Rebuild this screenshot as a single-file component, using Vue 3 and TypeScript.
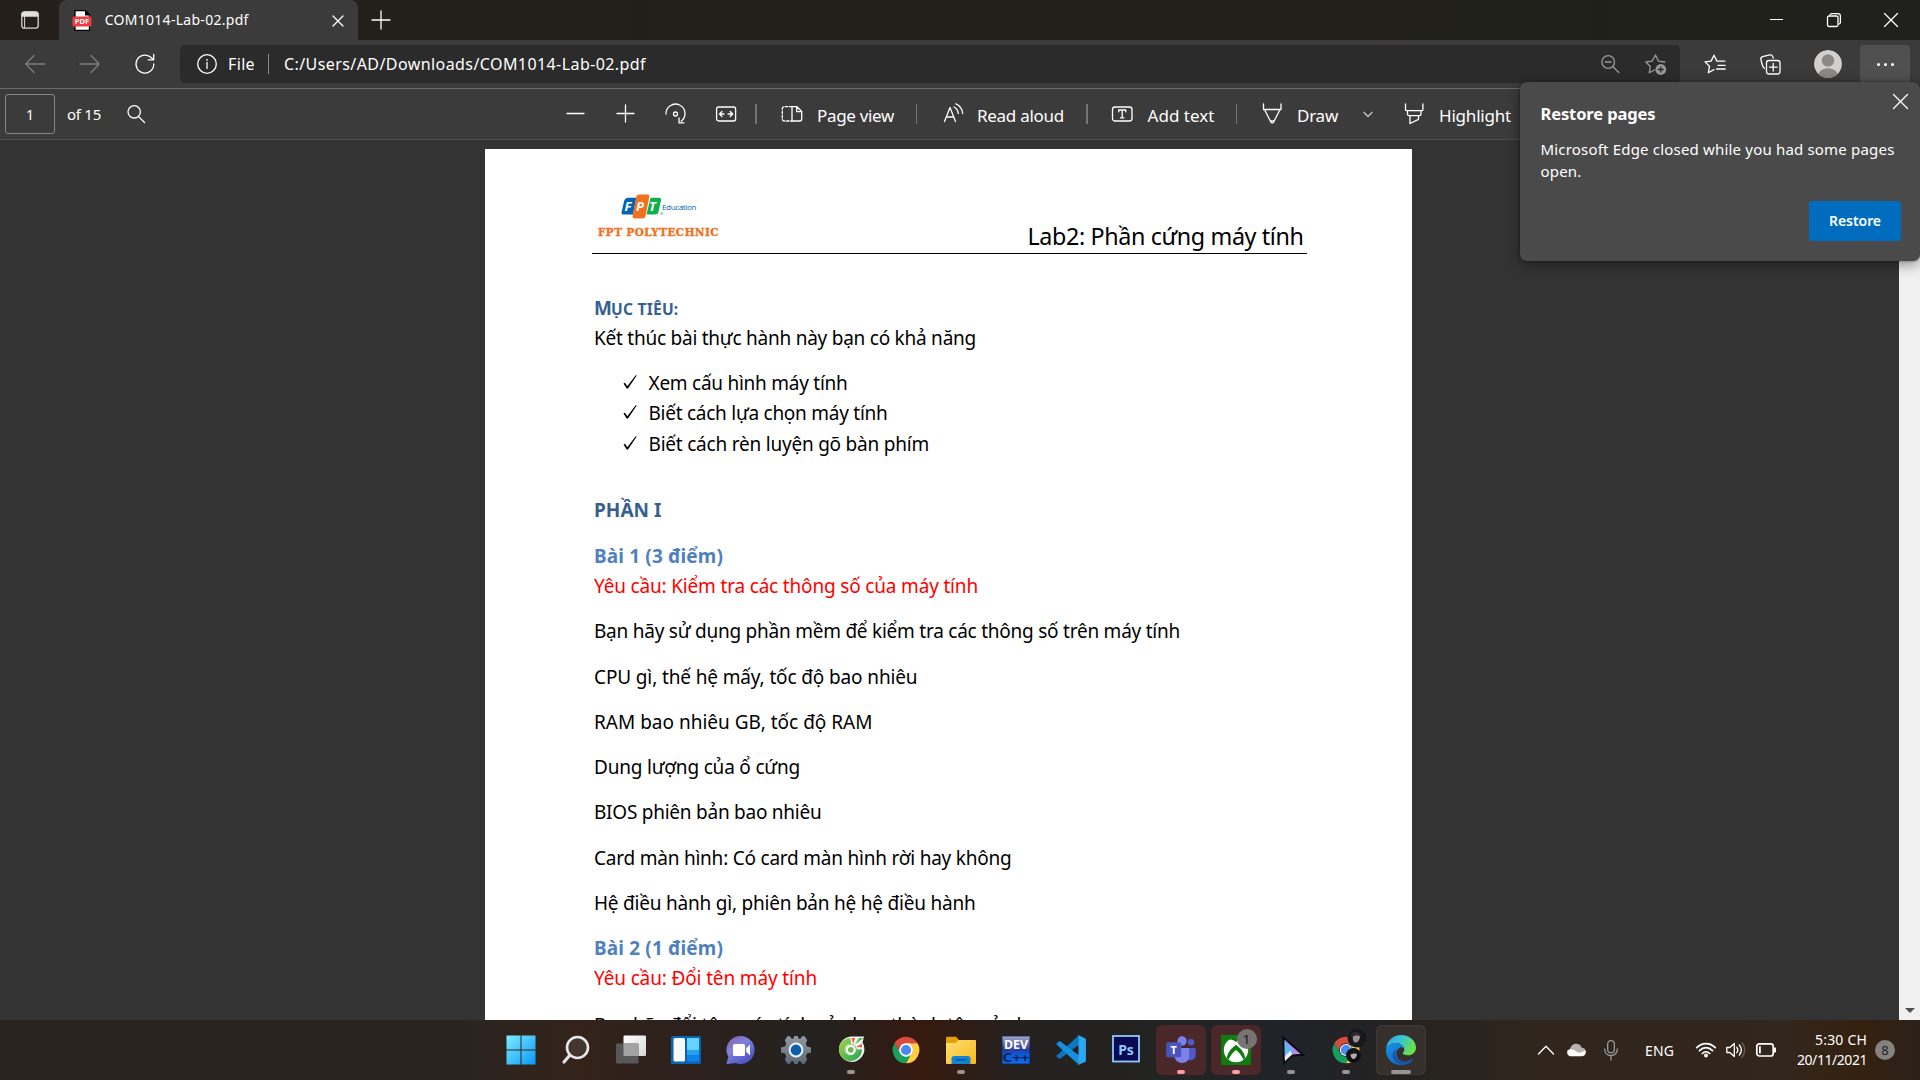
<script setup lang="ts">
import type { Directive } from 'vue'

// Tracks a label so that it fills the given width in pixels.
const vFit: Directive<HTMLElement, number> = {
  mounted(el, binding) {
    el.style.letterSpacing = '0px'
    const natural = el.getBoundingClientRect().width
    const count = Array.from(el.textContent ?? '').length
    if (count > 0) el.style.letterSpacing = `${(binding.value - natural) / count}px`
  },
}

interface Line {
  text: string
  width: number
  kind: 'title' | 'heading' | 'request' | 'para'
}

const goals = [
  { text: 'Xem cấu hình máy tính', width: 199 },
  { text: 'Biết cách lựa chọn máy tính', width: 239 },
  { text: 'Biết cách rèn luyện gõ bàn phím', width: 280.5 },
]

const lines: Line[] = [
  { text: 'PHẦN I', width: 67.5, kind: 'title' },
  { text: 'Bài 1 (3 điểm)', width: 129, kind: 'heading' },
  { text: 'Yêu cầu: Kiểm tra các thông số của máy tính', width: 384, kind: 'request' },
  { text: 'Bạn hãy sử dụng phần mềm để kiểm tra các thông số trên máy tính', width: 586, kind: 'para' },
  { text: 'CPU gì, thế hệ mấy, tốc độ bao nhiêu', width: 323.5, kind: 'para' },
  { text: 'RAM bao nhiêu GB, tốc độ RAM', width: 278.5, kind: 'para' },
  { text: 'Dung lượng của ổ cứng', width: 206, kind: 'para' },
  { text: 'BIOS phiên bản bao nhiêu', width: 227.5, kind: 'para' },
  { text: 'Card màn hình: Có card màn hình rời hay không', width: 417.5, kind: 'para' },
  { text: 'Hệ điều hành gì, phiên bản hệ hệ điều hành', width: 381.5, kind: 'para' },
  { text: 'Bài 2 (1 điểm)', width: 129, kind: 'heading' },
  { text: 'Yêu cầu: Đổi tên máy tính', width: 223, kind: 'request' },
  { text: 'Bạn hãy đổi tên máy tính của bạn thành tên của bạn', width: 456, kind: 'para' },
]
</script>

<template>
  <div class="desktop">
    <header class="tabstrip">
      <svg class="tab-actions" viewBox="0 0 18 18" width="18" height="18">
        <rect x=".8" y=".8" width="16.4" height="16.4" rx="2.6" fill="none" stroke="#d8d6d3" stroke-width="1.3" />
        <path d="M1 5.2V3.2A2.4 2.4 0 0 1 3.4 1h11.200A2.400 2.400 0 0 1 17 3.200v2zM3.600 5v12" fill="#e4e3e0" stroke="#d8d6d3" stroke-width="1" />
      </svg>
      <div class="tab">
        <svg class="pdf" viewBox="0 0 20 21" width="20" height="21">
          <path d="M3 .7h10.500L17.500 5v15.300H3z" fill="#fff" stroke="#000" stroke-width="1.300" />
          <path d="M13 .5V5.500h5z" fill="#000" />
          <rect x=".5" y="6.500" width="19" height="10" rx="1.500" fill="#f23b3f" />
          <text x="10" y="14.200" text-anchor="middle" class="pdf-text">PDF</text>
        </svg>
        <span class="tab-title"><span v-fit="144" class="fit">COM1014-Lab-02.pdf</span></span>
        <svg class="tab-close" viewBox="0 0 12 12" width="12" height="12"><path d="M1 1l10 10M11 1L1 11" class="st" /></svg>
      </div>
      <svg class="tab-new" viewBox="0 0 18 18" width="18" height="18"><path d="M9 0v18M0 9h18" class="st" /></svg>
      <div class="window-buttons">
        <svg viewBox="0 0 14 14" width="14" height="14"><path d="M0 6.500h13" stroke="#fff" stroke-width="1" /></svg>
        <svg viewBox="0 0 14 14" width="14" height="14">
          <rect x=".5" y="3" width="10.500" height="10.500" rx="1.500" class="st" />
          <path d="M3 1.800C3.300 1 3.700.6 4.500.6H11A2.500 2.500 0 0 1 13.400 3v6.500c0 .8-.4 1.200-1.200 1.500" class="st" />
        </svg>
        <svg viewBox="0 0 14 14" width="14" height="14"><path d="M.5.5l13 13M13.500.5l-13 13" class="st" /></svg>
      </div>
    </header>

    <nav class="navbar">
      <svg class="back" viewBox="0 0 20 20" width="20" height="20"><path d="M9 1.500L.8 10 9 18.500M1 10h19" class="st dim" /></svg>
      <svg class="forward" viewBox="0 0 20 20" width="20" height="20"><path d="M11 1.500l8.200 8.500-8.200 8.500M19 10H0" class="st dim" /></svg>
      <svg class="reload" viewBox="0 0 20 20" width="20" height="20"><path d="M18.800 10A8.900 9 0 1 1 15.400 3l3 2.600M18.700.5v5.300h-5.500" class="st" stroke-width="1.500" /></svg>
      <div class="address">
        <svg class="info" viewBox="0 0 20 20" width="20" height="20">
          <circle cx="10" cy="10" r="9.300" class="st" /><path d="M10 8.500v6" class="st" /><circle cx="10" cy="5.800" r=".9" fill="#fff" />
        </svg>
        <span v-fit="27" class="fit scheme">File</span>
        <i class="address-sep"></i>
        <span v-fit="362" class="fit url">C:/Users/AD/Downloads/COM1014-Lab-02.pdf</span>
        <svg class="zoom-out" viewBox="0 0 18 18" width="18" height="18">
          <circle cx="7.200" cy="7" r="6.300" class="st grey" /><path d="M4.300 7h5.800M11.800 11.500l6 6" class="st grey" />
        </svg>
        <svg class="star-add" viewBox="0 0 22 21" width="22" height="21">
          <path d="M9.500 16L4.300 18.800l1-6.300L.8 8l6.200-.9L10.500 1l3 6.100 6.300.9" class="st grey" />
          <circle cx="15.800" cy="15.500" r="5.400" fill="#999" /><path d="M15.800 12.500v6M12.800 15.500h6" stroke="#2b2b2b" stroke-width="1.300" />
        </svg>
      </div>
      <svg class="favorites" viewBox="0 0 22 20" width="22" height="20">
        <path d="M10 15.600l-5.700 3.200 1.200-6.500L1 7.900l6.100-.8L10 1.200l2.900 5.900h8M14 11.300h7.200M12.500 15h8.700" class="st" />
      </svg>
      <svg class="collections" viewBox="0 0 21 21" width="21" height="21">
        <rect x="6.500" y="6.500" width="13.500" height="13.500" rx="2.500" class="st" /><path d="M13.200 9.500v7.500M9.500 13.200h7.500" class="st" />
        <path d="M4.500 14.500C3 13.500 2.400 12 2 10L.9 5.500C.6 4 1.300 3 2.700 2.600l7-1.700c1.400-.3 2.600.2 3.100 1.700l.4 1.500" class="st" />
      </svg>
      <svg class="avatar" viewBox="0 0 28 28" width="28" height="28">
        <defs><clipPath id="avatar-clip"><circle cx="14" cy="14" r="14" /></clipPath></defs>
        <g clip-path="url(#avatar-clip)"><circle cx="14" cy="14" r="14" fill="#d2d0ce" /><circle cx="14" cy="10.500" r="6.200" fill="#8c8885" /><ellipse cx="14" cy="26.500" rx="10.500" ry="8.200" fill="#8c8885" /></g>
      </svg>
      <div class="more"><i></i><i></i><i></i></div>
    </nav>

    <div class="pdfbar">
      <div class="page-input">1</div>
      <span v-fit="34" class="fit of">of 15</span>
      <svg class="find" viewBox="0 0 24 24" width="24" height="24"><circle cx="10.200" cy="9.800" r="6.200" class="st" /><path d="M14.500 14.500l6 6" class="st" /></svg>
      <svg class="minus" viewBox="0 0 24 24" width="24" height="24"><path d="M4 11.500h17" class="st" /></svg>
      <svg class="step" viewBox="0 0 24 24" width="24" height="24"><path d="M4 11.500h17M12.500 3v17" class="st" /></svg>
      <svg class="step" viewBox="0 0 24 24" width="24" height="24">
        <path d="M3 12a9.500 9.500 0 1 1 15.200 7.200M16 15.800v5h5" class="st" /><circle cx="12.500" cy="12" r="2" class="st" />
      </svg>
      <svg class="step-fit" viewBox="0 0 24 24" width="24" height="24">
        <rect x="2.600" y="5" width="19" height="14" rx="2" class="st" /><path d="M10 12H5.500M8 9.500L5.500 12 8 14.500M14 12h4.700M16.200 9.500l2.500 2.500-2.500 2.500" class="st" />
      </svg>
      <i class="sep wide s1"></i>
      <svg class="tool-icon i1" viewBox="0 0 24 24" width="24" height="24">
        <path d="M12 4.700h5l4.700 4.800V17a2 2 0 0 1-2 2H12zM16.700 5v4.700h4.800" class="st" />
        <path d="M12 4.700H4.300a2 2 0 0 0-2 2V17a2 2 0 0 0 2 2H12" class="st" stroke-dasharray="2.600 1.700" />
      </svg>
      <span v-fit="77" class="fit label">Page view</span>
      <i class="sep s2"></i>
      <svg class="tool-icon i2" viewBox="0 0 24 24" width="24" height="24">
        <path d="M3.500 19.500L9 5.500l5.500 14M5.300 15h7.400M13 5c2.500 1.300 4 3.500 4.300 6.500M15 1.800c4 1.900 6.300 5.200 6.700 9.700" class="st" />
      </svg>
      <span v-fit="87" class="fit label l2">Read aloud</span>
      <i class="sep wide s3"></i>
      <svg class="tool-icon i3" viewBox="0 0 24 24" width="24" height="24">
        <rect x="2.500" y="5" width="19.500" height="14" rx="2.500" class="st" /><path d="M8.700 9.800V8h7v1.800M12.200 8v7.800M10.500 15.900h3.400" class="st" />
      </svg>
      <span v-fit="67" class="fit label l4">Add text</span>
      <i class="sep s4"></i>
      <svg class="tool-icon i4" viewBox="0 0 24 24" width="24" height="24"><path d="M3.500 2v5.500h17.500V2M4.500 7.500l6.200 12.300c.7 1.500 2.400 1.500 3.100 0L20 7.500M10.500 18.800h3.500" class="st" /></svg>
      <span v-fit="41" class="fit label l3">Draw</span>
      <svg class="chevron" viewBox="0 0 24 24" width="24" height="24"><path d="M8 10.500l4 4 4-4" class="st light" /></svg>
      <svg class="tool-icon i5" viewBox="0 0 24 24" width="24" height="24"><path d="M3.500 2v5.500c0 .8.500 1.200 1.300 1.200h14.800c.8 0 1.300-.4 1.300-1.200V2M5.500 9v3c0 1 .5 1.700 1.500 1.700h10.500c1 0 1.500-.7 1.500-1.700V9M8 14v7.500l8.500-4.200V14" class="st" /></svg>
      <span v-fit="72" class="fit label l3">Highlight</span>
    </div>

    <main class="viewer">
      <article class="page">
        <div class="page-header">
          <div class="brand">
            <div class="brand-top">
              <svg viewBox="0 0 41 25" width="41" height="25">
                <path d="M5 4.500C5.500 4 6 3.800 7 3.800h8.500L12 20.500H2.500C1 20.500.2 20 .5 18.500L3 7.500C3.300 6 4 5.200 5 4.500z" fill="#0066b3" />
                <path d="M18 .5h8.500C28 .5 28.700 1.500 28.300 3L24.500 22c-.4 1.700-1.500 2.500-3 2.500h-8c-1.500 0-2.300-1-1.900-2.500L15.200 3C15.500 1.400 16.500.5 18 .5z" fill="#f37021" />
                <path d="M29.500 3.800H38c1.700 0 2.300.9 2 2.500l-2.500 11.500c-.4 1.800-1.500 2.700-3.200 2.700H25.500z" fill="#0db14b" />
                <g class="brand-letters"><text x="3.500" y="17">F</text><text x="15" y="17">P</text><text x="28" y="17">T</text></g>
              </svg>
              <span class="reg">®</span>
              <span v-fit="34" class="fit education">Education</span>
            </div>
            <span v-fit="121" class="fit poly">FPT POLYTECHNIC</span>
          </div>
          <span v-fit="276" class="fit doc-title">Lab2: Phần cứng máy tính</span>
        </div>
        <div class="doc">
          <div class="row goal-title"><span v-fit="17" class="fit">M</span><span v-fit="67.5" class="fit small">ỤC TIÊU:</span></div>
          <div class="row spaced"><span v-fit="382" class="fit">Kết thúc bài thực hành này bạn có khả năng</span></div>
          <ul class="goals">
            <li v-for="goal in goals" :key="goal.text" class="row goal">
              <svg viewBox="0 0 14 14" width="14" height="14"><path d="M.5 8.500L2 7.700l2.300 3.600L12.700.3l1 .2L5 13.500H3.700z" fill="#000" /></svg>
              <span v-fit="goal.width" class="fit">{{ goal.text }}</span>
            </li>
          </ul>
          <div v-for="line in lines" :key="line.text" class="row" :class="line.kind">
            <span v-fit="line.width" class="fit">{{ line.text }}</span>
          </div>
        </div>
      </article>
      <div class="scrollbar"><i class="arrow"></i></div>
    </main>

    <footer class="taskbar">
      <div class="apps">
        <div class="app">
          <svg viewBox="0 0 30 30" width="30" height="30">
            <defs><linearGradient id="win" x1="0" y1="0" x2="30" y2="30" gradientUnits="userSpaceOnUse"><stop offset="0" stop-color="#7df0ff" /><stop offset="1" stop-color="#0a94fb" /></linearGradient></defs>
            <path d="M.5.500h14v14H.500zM15.500.500h14v14h-14zM.500 15.500h14v14H.500zM15.500 15.500h14v14h-14z" fill="url(#win)" />
          </svg>
        </div>
        <div class="app">
          <svg viewBox="0 0 30 30" width="30" height="30"><path d="M8.500 20.500L3 27" stroke="#dfe2e5" stroke-width="3.200" stroke-linecap="round" /><circle cx="16.500" cy="12.500" r="10.500" fill="#54494480" stroke="#e6e8ea" stroke-width="2.600" /></svg>
        </div>
        <div class="app">
          <svg viewBox="0 0 30 30" width="30" height="30">
            <defs><linearGradient id="tv" x1="0" y1="0" x2="1" y2="1"><stop offset="0" stop-color="#fff" /><stop offset="1" stop-color="#d8d8d8" /></linearGradient></defs>
            <rect x="7.500" y=".5" width="22.500" height="20.500" rx="1.200" fill="url(#tv)" /><rect x="0" y="8.500" width="22.500" height="20" rx="1.200" fill="#585858" /><path d="M7.500 8.500h15V21h-15z" fill="#a3a3a3" />
          </svg>
        </div>
        <div class="app">
          <svg viewBox="0 0 30 30" width="30" height="30">
            <rect x="0" y="1" width="30" height="28" rx="1.500" fill="#0b62b5" /><rect x="2.500" y="3" width="11.500" height="23.500" rx="1.500" fill="#f6f8fa" /><path d="M16 3h12v12.500H16z" fill="#65d3fb" /><path d="M16 16h12v4.500H16z" fill="#1fa3f5" /><path d="M16 21h12v5.500H16z" fill="#0b83e8" />
          </svg>
        </div>
        <div class="app">
          <svg viewBox="0 0 30 30" width="30" height="30">
            <defs><linearGradient id="chat" x1="0" y1="0" x2=".7" y2="1"><stop offset="0" stop-color="#8a5fa8" /><stop offset=".45" stop-color="#7c83dd" /><stop offset="1" stop-color="#4a4fc0" /></linearGradient></defs>
            <path d="M15.500 1A14 14 0 1 1 9.500 28l-7.200 1C.8 29.200.2 28.300.8 27l1.600-5A14 14 0 0 1 15.500 1z" fill="url(#chat)" />
            <rect x="7" y="9" width="12" height="12" rx="1.500" fill="#fff" /><path d="M20.200 13.200L24 9.500v11l-3.800-3.700z" fill="#fff" />
          </svg>
        </div>
        <div class="app">
          <svg viewBox="0 0 30 30" width="30" height="30">
            <defs><linearGradient id="gear" x1="0" y1="0" x2="0" y2="1"><stop offset="0" stop-color="#9299a1" /><stop offset="1" stop-color="#5c6a76" /></linearGradient></defs>
            <path d="M6.300 1.200h2.700l1.500 2.500h1.800L13.300 1h3.400l1 2.700h1.800L21 1.200h2.700l2.500 4.400-1.300 2.700.8 3 4.300 1.200v5l-4.300 1.200-.8 3 1.300 2.700-2.500 4.400H21l-1.500-2.500h-1.800L16.700 29h-3.400l-1-2.700h-1.800L9 28.800H6.300l-2.500-4.400 1.300-2.700-.8-3L0 17.500v-5l4.300-1.200.8-3-1.300-2.700z" fill="url(#gear)" />
            <circle cx="15" cy="15" r="6.400" fill="#0b5fae" stroke="#eef1f4" stroke-width="2" />
          </svg>
        </div>
        <div class="app">
          <svg viewBox="0 0 30 30" width="30" height="30">
            <defs><linearGradient id="coc" x1="0" y1="0" x2="1" y2="1"><stop offset="0" stop-color="#a6d04a" /><stop offset="1" stop-color="#22a55a" /></linearGradient></defs>
            <path d="M15 1.500h13l-1.500 6A12.700 12.700 0 1 1 15 1.500z" fill="#f4f6f2" />
            <path d="M14.500 3a11.500 11.500 0 1 0 11.400 11.200l-5.400.3a6 6 0 1 1-5.200-5.700z" fill="url(#coc)" />
            <circle cx="14.800" cy="15" r="6" fill="url(#coc)" /><circle cx="14.800" cy="14.800" r="4" fill="#6cbb4a" stroke="#fff" stroke-width="2.300" />
            <path d="M15.700 3h3.300l-1.800 6.200zM20 12l6-3.300v3.500z" fill="#ee5838" /><path d="M18.800 9.500L23 3h4.500z" fill="#45b649" />
          </svg>
          <i class="dot"></i>
        </div>
        <div class="app">
          <svg viewBox="-1.500 -1.500 27 27" width="30" height="30">
            <circle cx="12" cy="12" r="7" fill="#fff" />
            <path d="M1.600 6A12 12 0 0 1 22.400 6H12a6 6 0 0 0-5.200 9z" fill="#da4a3f" /><path d="M1.600 6l5.200 9a6 6 0 0 0 10.400 0L12 24A12 12 0 0 1 1.600 6z" fill="#17a05c" /><path d="M22.400 6A12 12 0 0 1 12 24l5.200-9A6 6 0 0 0 12 6z" fill="#ffcd42" />
            <circle cx="12" cy="12" r="5.300" fill="#fff" /><circle cx="12" cy="12" r="4.600" fill="#4889f4" />
          </svg>
        </div>
        <div class="app">
          <svg viewBox="0 0 30 30" width="30" height="30">
            <defs><linearGradient id="fold" x1="0" y1="0" x2="1" y2="1"><stop offset="0" stop-color="#ffdf72" /><stop offset="1" stop-color="#f9b91a" /></linearGradient></defs>
            <path d="M0 3c0-.8.500-1.300 1.300-1.300H10L13 5h15.500v8H0z" fill="#e3a00c" /><path d="M0 8h9.500l3-3H29c.7 0 1 .4 1 1v21.700c0 .8-.5 1.300-1.300 1.300H1.300C.5 29 0 28.500 0 27.700z" fill="url(#fold)" />
            <path d="M5.500 29v-5.500c0-1.500 1-2.500 2.500-2.500h14c1.500 0 2.500 1 2.500 2.500V29z" fill="#1583d2" /><path d="M10 24.800h10" stroke="#08549a" stroke-width="1.500" stroke-linecap="round" />
          </svg>
          <i class="dot"></i>
        </div>
        <div class="app">
          <svg viewBox="0 0 30 30" width="30" height="30">
            <defs><linearGradient id="dev" x1="0" y1="0" x2="0" y2="1"><stop offset="0" stop-color="#a5a9c5" /><stop offset=".5" stop-color="#28399b" /><stop offset=".6" stop-color="#0b55d2" /><stop offset="1" stop-color="#0e6de8" /></linearGradient></defs>
            <rect x="1" y="1" width="28" height="28" fill="url(#dev)" stroke="#14204f" stroke-width=".8" />
            <text x="15" y="13.500" text-anchor="middle" class="dev-text" fill="#fff" textLength="24" lengthAdjust="spacingAndGlyphs">DEV</text><text x="15" y="27" text-anchor="middle" class="dev-text" fill="#0a2352" textLength="27" lengthAdjust="spacingAndGlyphs">C++</text>
          </svg>
        </div>
        <div class="app">
          <svg viewBox="0 0 30 30" width="30" height="30">
            <path d="M22.500.5L3.300 18.200 1 20c-.7.600-.7 1.200-.1 1.800l1.700 1.600c.6.500 1.200.5 1.800 0L24 9z" fill="#0b76bd" /><path d="M22.500 29.500L1 10c-.7-.6-.7-1.200-.1-1.800l1.700-1.600c.6-.5 1.200-.5 1.800 0L24 21z" fill="#1490dc" />
            <path d="M22.500.3L29 3.200c.6.300.9.700.9 1.400v20.800c0 .7-.3 1.200-.9 1.500l-6.500 2.800c-.6.200-1 .1-1.500-.4.700.4 1.500 0 1.500-.9V1.600c0-.9-.8-1.300-1.500-.9.500-.5.900-.6 1.500-.4z" fill="#2aa7f0" />
          </svg>
        </div>
        <div class="app">
          <svg viewBox="0 0 30 30" width="30" height="30"><rect x="2" y="1" width="26" height="25.500" fill="#0a0a52" stroke="#8fc8fa" stroke-width="1.800" /><text x="15" y="19.500" text-anchor="middle" class="ps-text" fill="#8fc8fa">Ps</text></svg>
        </div>
        <div class="app alert">
          <svg viewBox="0 0 30 30" width="30" height="30">
            <circle cx="25" cy="7.200" r="3.300" fill="#5059c9" /><path d="M20 13h8.500c.8 0 1.200.4 1.200 1.200V20c0 3-2 5.200-5 5.200H20z" fill="#5059c9" />
            <circle cx="16" cy="6" r="4.700" fill="#7b83eb" /><path d="M8.500 13h13.300c.9 0 1.400.5 1.400 1.400V21c0 4-3 7-7 7s-7.700-3-7.700-7z" fill="#7b83eb" />
            <rect x=".3" y="7.300" width="15" height="15" rx="1.500" fill="#4b53bc" /><text x="7.800" y="19" text-anchor="middle" class="teams-text" fill="#fff">T</text>
          </svg>
          <i class="dot pink"></i>
        </div>
        <div class="app alert">
          <svg viewBox="0 0 30 30" width="30" height="30">
            <rect width="30" height="30" rx="1" fill="#107c10" /><circle cx="15" cy="15" r="12.200" fill="#fff" />
            <path d="M8 4.600C10.500 4 13 5.500 15 7c2-1.500 4.500-3 7-2.400C19 1.700 11 1.700 8 4.600zM15 9.800c5 3.500 9 8.500 9 13.400l-1.500 1.500C21 20.800 18 17.500 15 15c-3 2.500-6 5.800-7.500 9.700L6 23.200c0-4.900 4-9.900 9-13.400z" fill="#107c10" />
          </svg>
          <span class="badge">1</span>
          <i class="dot pink"></i>
        </div>
        <div class="app">
          <svg viewBox="0 0 30 30" width="30" height="30"><path d="M7.500 2.500L27 19.800l-10.800.700L8 28z" fill="#b78af0" stroke="#0a0a0d" stroke-width="2" /><path d="M8.700 5l8.800 11.500-3 2.800L8.700 20z" fill="#57b9ef" /><path d="M8.700 21l6-5.500 1.500 4L9 26z" fill="#ece9fb" /></svg>
          <i class="dot"></i>
        </div>
        <div class="app">
          <svg viewBox="-1.500 -1.500 27 27" width="30" height="30">
            <path d="M1.600 6A12 12 0 0 1 22.400 6H12a6 6 0 0 0-5.200 9z" fill="#da4a3f" /><path d="M1.600 6l5.200 9a6 6 0 0 0 10.400 0L12 24A12 12 0 0 1 1.600 6z" fill="#17a05c" /><path d="M22.400 6A12 12 0 0 1 12 24l5.200-9A6 6 0 0 0 12 6z" fill="#ffcd42" />
            <circle cx="12" cy="12" r="5.500" fill="#fff" /><circle cx="12" cy="12" r="4.600" fill="#4889f4" />
          </svg>
          <svg class="photos" viewBox="0 0 36 38" width="36" height="38">
            <circle cx="26" cy="11" r="9.500" fill="#17181c" /><path d="M22 9c1.500-3 6-2.500 7 1-.5 3.500-3 6-4.800 5.500S21.300 12 22 9z" fill="#9d9092" /><path d="M20 7.500c3-4.500 8-3.500 10.500 2-3.500-1.500-6-1.500-9.500.5z" fill="#2b2b30" />
            <circle cx="22.500" cy="28.500" r="7.500" fill="#0f1013" /><path d="M19.500 26c1.500-3 6-2.500 6.500.5 0 3.500-2.500 6-4 5.500s-3-3-2.500-6z" fill="#b5aaa9" /><path d="M18 25.500c3-4 7-3 9 2-3-1.500-5-1.500-8 .5z" fill="#17171a" />
          </svg>
          <i class="dot"></i>
        </div>
        <div class="app current">
          <svg viewBox="0 0 30 30" width="30" height="30">
            <defs>
              <linearGradient id="edge-a" x1="0" y1="0" x2="1" y2=".4"><stop offset="0" stop-color="#2aa6e6" /><stop offset=".5" stop-color="#36c4d6" /><stop offset="1" stop-color="#6be04b" /></linearGradient>
              <linearGradient id="edge-b" x1="0" y1="0" x2=".5" y2="1"><stop offset="0" stop-color="#1c8fe0" /><stop offset="1" stop-color="#0f6fd2" /></linearGradient>
            </defs>
            <path d="M.2 13.500C1 5.500 7.200 0 15 0c9 0 15 6.300 15 12.500 0 4.800-3.800 7.800-8 7.800-3.500 0-5.300-1.200-5.300-2 0-.7 1.600-1.300 1.600-3.800 0-3-3.500-6.500-8.300-6.500-5 0-8.500 2.500-9.800 5.500z" fill="url(#edge-a)" />
            <path d="M.1 14C1 10.300 5 8 9.500 8c4.800 0 8.300 2.800 8.700 5.700-1-1-2-1.500-3.500-1.500-2.700 1-4.700 4-4.200 7.300.6 4.700 4.500 8.500 10.500 8-2 1.600-4.500 2.500-6.500 2.500C6.500 30 0 23.500 0 15.500z" fill="url(#edge-b)" />
            <path d="M11 13.700c-1.300 1.600-1.800 3.500-1.500 5.300.8 5.300 6.500 9.300 13.300 6.500 1.800-.7 3-1.700 3.800-1.700.6 0 .9.600.5 1.200C24.500 28.500 20 30 17 29.900 11 29.800 6.300 25 6.500 20c.1-3 2-5.300 4.500-6.300z" fill="#1557a8" />
          </svg>
          <i class="dot long"></i>
        </div>
      </div>
      <div class="tray">
        <svg class="t-up" viewBox="0 0 16 10" width="16" height="10"><path d="M.5 9L8 1.300 15.500 9" class="st" /></svg>
        <svg class="t-cloud" viewBox="0 0 20 14" width="20" height="14"><path d="M4 6.500C4.500 3 7 .7 10 .7c3 0 4.800 1.500 5.700 4 2.300 0 4 1.600 4.200 4L12 11 1 8.500C1 7.300 2.500 6.500 4 6.500z" fill="#b7b3b0" /><path d="M3.500 6.300c2.500-.5 4 .2 6 1.700l3.500 2 6.700-2.200c.6 3-1 5.400-3.700 5.400H4A3.600 3.600 0 0 1 3.500 6.300z" fill="#fff" /></svg>
        <svg class="t-mic" viewBox="0 0 14 20" width="14" height="20"><rect x="3.700" y=".7" width="6.600" height="12" rx="3.300" class="st grey" /><path d="M.7 9c0 4 2.600 6.500 6.300 6.500s6.300-2.500 6.300-6.500M7 15.500V20" class="st grey" /></svg>
        <span v-fit="29" class="fit t-lang">ENG</span>
        <svg class="t-wifi" viewBox="0 0 20 16" width="20" height="16"><path d="M.7 5.700c5.300-5.500 13.300-5.500 18.600 0M3.500 8.700c3.800-4 9.200-4 13 0M6.300 11.500c2.200-2.200 5.200-2.200 7.400 0" class="st bold" /><circle cx="10" cy="13.500" r="1.900" fill="#fff" /></svg>
        <svg class="t-vol" viewBox="0 0 20 16" width="20" height="16"><path d="M.8 5.500h3L8.300 1.500v13L3.800 10.500h-3z" class="st" /><path d="M10.800 5.300c1.300 1.600 1.300 3.800 0 5.400M13.300 3c2.500 3 2.500 7 0 10" class="st" /><path d="M16 1c3.500 4 3.500 10 0 14" class="st faint" /></svg>
        <svg class="t-bat" viewBox="0 0 21 14" width="21" height="14"><rect x=".8" y=".8" width="16.400" height="12.200" rx="2.500" class="st bold" /><path d="M3 3.300h1.800v7.200H3z" fill="#fff" /><path d="M17.500 4.500H19c.7 0 1 .4 1 1v3c0 .6-.3 1-1 1h-1.500z" fill="#fff" /></svg>
        <div class="clock"><span v-fit="52" class="fit">5:30 CH</span><span v-fit="70" class="fit">20/11/2021</span></div>
        <span class="t-count">8</span>
      </div>
    </footer>

    <aside class="restore">
      <svg class="restore-close" viewBox="0 0 15 15" width="15" height="15"><path d="M.5.5l14 14M14.500.5l-14 14" class="st" /></svg>
      <div class="restore-title"><span v-fit="115" class="fit">Restore pages</span></div>
      <p class="restore-text"><span v-fit="354" class="fit">Microsoft Edge closed while you had some pages</span><br /><span v-fit="41" class="fit">open.</span></p>
      <button class="restore-button"><span v-fit="52" class="fit">Restore</span></button>
    </aside>
  </div>
</template>

<style>
body {
  margin: 0;
  overflow: hidden;
}
</style>

<style scoped>
.desktop {
  position: relative;
  display: flex;
  flex-direction: column;
  width: 1920px;
  height: 1080px;
  overflow: hidden;
  background: #333;
  color: #fff;
  font-family: "Noto Sans", "Open Sans", sans-serif;
}
svg { display: block; flex: none; overflow: visible; }
.fit { display: inline-block; white-space: pre; flex: none; }
.st { fill: none; stroke: #fff; stroke-width: 1.3; stroke-linecap: round; stroke-linejoin: round; }
.dim { stroke: #7c7c7c; }
.grey { stroke: #999; }
.light { stroke: #c8c8c8; }
.faint { stroke: #6d635c; }
.bold { stroke-width: 1.7; }

.tabstrip {
  display: flex;
  align-items: center;
  flex: none;
  height: 40px;
  background: linear-gradient(90deg, #241f1a, #22201a 50%, #20211c);
}
.tab-actions { margin-left: 21px; }
.tab {
  display: flex;
  align-items: center;
  width: 299px;
  height: 40px;
  margin-left: 20px;
  border-radius: 8px 8px 0 0;
  background: #3b3b3b;
}
.pdf { margin-left: 13px; }
.pdf-text { font: 700 7.500px "Noto Sans", sans-serif; fill: #fff; }
.tab-title { flex: 1; margin-left: 12.700px; font-size: 14px; line-height: 20px; margin-top: -1px; }
.tab-close { margin: 1px 14px 0 0; }
.tab-new { margin-left: 13.500px; }
.window-buttons { display: flex; gap: 43px; margin-left: auto; margin-right: 22px; }

.navbar {
  display: flex;
  align-items: center;
  flex: none;
  height: 48px;
  border-bottom: 1px solid #6b6b6b;
  background: #3b3b3b;
}
.back { margin-left: 25px; }
.forward, .reload { margin-left: 35px; }
.address {
  display: flex;
  align-items: center;
  width: 1500px;
  height: 38px;
  margin-left: 25px;
  border-radius: 5px;
  background: #2b2b2b;
  font-size: 16px;
}
.info { margin-left: 17px; }
.scheme { margin-left: 11px; }
.address-sep { width: 1px; height: 20px; margin-left: 13px; background: #8a8a8a; }
.url { margin-left: 15px; }
.zoom-out { margin-left: auto; }
.star-add { margin: 0 13px 0 26px; }
.favorites { margin-left: 24px; }
.collections { margin-left: 34px; }
.avatar { margin-left: 33px; }
.more {
  display: flex;
  align-items: center;
  justify-content: center;
  gap: 4px;
  width: 50px;
  height: 38px;
  margin-left: 18px;
  border-radius: 4px;
  background: #505050;
}
.more i { width: 3px; height: 3px; border-radius: 50%; background: #fff; }

.pdfbar {
  display: flex;
  align-items: center;
  flex: none;
  box-sizing: border-box;
  height: 51px;
  border-bottom: 1px solid #505050;
  background: #3b3b3b;
  font-size: 17px;
}
.page-input {
  box-sizing: border-box;
  width: 50px;
  height: 40px;
  margin-left: 5px;
  border: 1px solid #858585;
  border-radius: 3px;
  font-size: 14px;
  line-height: 39px;
  text-align: center;
}
.of { margin-left: 12px; font-size: 15px; }
.find { margin-left: 23px; }
.minus { margin-left: 415px; }
.step { margin-left: 26px; }
.step-fit { margin-left: 27px; }
.sep { width: 1px; height: 20px; background: #757575; }
.wide { width: 2px; }
.s1 { margin-left: 17px; }
.i1 { margin-left: 23px; }
.label { margin-left: 13px; line-height: 24px; padding-top: 3px; }
.s2 { margin-left: 22px; }
.i2 { margin-left: 24px; }
.l2 { margin-left: 12px; }
.s3 { margin-left: 22px; }
.i3 { margin-left: 22px; }
.l3 { margin-left: 13px; }
.l4 { margin-left: 13.500px; }
.s4 { margin-left: 21.500px; }
.i4 { margin-left: 23px; }
.chevron { margin-left: 18px; }
.i5 { margin-left: 22px; }

.viewer { display: flex; flex: none; height: 880px; overflow: hidden; background: #333; }
.page { width: 927px; height: 900px; margin: 9px 0 0 485px; background: #fff; color: #000; }
.page-header {
  display: flex;
  justify-content: space-between;
  align-items: flex-end;
  box-sizing: border-box;
  height: 105px;
  margin: 0 105px 0 107px;
  border-bottom: 1px solid #000;
}
.brand { display: flex; flex-direction: column; height: 59px; margin-left: 6px; }
.brand-top { display: flex; align-items: center; height: 25px; margin-left: 23px; }
.brand-letters { font: italic 700 13px "Noto Sans", sans-serif; fill: #fff; }
.reg { width: 0; margin: 14px 0 0 -2px; color: #0066b3; font-size: 4px; }
.education { margin-left: 2px; color: #0066b3; font-family: "Open Sans", sans-serif; font-size: 8px; font-weight: 500; }
.poly {
  margin-top: 5px;
  color: #f37021;
  font-family: "DejaVu Serif Condensed", "DejaVu Serif", serif;
  font-size: 11.500px;
  font-weight: 700;
  font-stretch: condensed;
  line-height: 16px;
  -webkit-text-stroke: .4px #f37021;
}
.doc-title { margin-right: 3.500px; font-size: 23.300px; line-height: 34px; }
.doc { padding: 38.500px 0 0 109px; font-size: 19px; }
.row { height: 30.200px; line-height: 30.200px; white-space: nowrap; }
.goal-title { color: #365f91; font-weight: 700; }
.small { font-size: 15.500px; }
.spaced { margin-bottom: 14.900px; }
.goals { margin: 0; padding: 0 0 0 28.500px; list-style: none; }
.goal { display: flex; align-items: center; height: 30.500px; }
.goal svg { margin: -3px 12px 0 0; }
.title { margin: 35.800px 0 15.600px; color: #365f91; font-weight: 700; }
.heading { color: #4f81bd; font-weight: 700; }
.request { margin-bottom: 15.100px; color: #f00; }
.para { margin-bottom: 15.100px; }
.para:last-child { padding-top: 1.300px; }
.scrollbar {
  display: flex;
  flex-direction: column;
  justify-content: flex-end;
  align-items: center;
  width: 21px;
  margin-left: auto;
  background: #f0f0f0;
}
.arrow { margin-bottom: 7px; border: 5px solid transparent; border-top-color: #505050; border-bottom: 0; }

.taskbar {
  display: flex;
  flex: none;
  height: 60px;
  background: linear-gradient(90deg, #29241f 0, #2a2420 24%, #33231a 30%, #2c211d 36%, #24211f 43%, #37190f 48%, #24211f 53%, #232322 60%, #202329 67%, #26221f 74%, #30261d 80%, #33261c 93%, #34210f 97%, #2b211b 100%);
}
.apps { display: flex; margin-left: 493px; }
.app {
  position: relative;
  display: flex;
  justify-content: center;
  align-items: center;
  box-sizing: border-box;
  width: 50px;
  height: 50px;
  margin: 5px 2.500px;
  border-radius: 6px;
}
.alert { background: #4a2829; }
.current { background: #35302c; box-shadow: inset 0 0 0 1px #403a35; }
.dot { position: absolute; left: 21px; bottom: 1px; width: 8px; height: 4px; border-radius: 2px; background: #999490; }
.long { left: 15px; width: 20px; }
.pink { background: #ff9ba4; }
.badge {
  position: absolute;
  left: 26px;
  top: 4px;
  width: 20px;
  height: 20px;
  border-radius: 50%;
  background: #777573;
  color: #111;
  font-size: 13px;
  line-height: 20px;
  text-align: center;
}
.photos { position: absolute; left: 10px; top: 2px; }
.dev-text { font: 700 11.500px "Noto Sans", sans-serif; }
.ps-text { font: 700 14px "Noto Sans", sans-serif; }
.teams-text { font: 700 11px "Noto Sans", sans-serif; }

.tray { display: flex; align-items: center; margin-left: 110px; font-size: 14.500px; }
.t-cloud { margin-left: 12px; }
.t-mic { margin-left: 18px; }
.t-lang { margin-left: 27px; font-size: 14px; }
.t-wifi { margin-left: 22px; }
.t-vol { margin-left: 10px; }
.t-bat { margin-left: 10px; }
.clock { display: flex; flex-direction: column; align-items: flex-end; width: 70px; margin-left: 20px; line-height: 20px; font-size: 14px; }
.t-count {
  width: 20px;
  height: 20px;
  margin-left: 8px;
  border-radius: 50%;
  background: #858280;
  color: #222;
  font-size: 13px;
  line-height: 20px;
  text-align: center;
}

.restore {
  position: absolute;
  left: 1520px;
  top: 82px;
  box-sizing: border-box;
  width: 400px;
  height: 179px;
  padding: 20px 19px 0 20.500px;
  border-radius: 7px;
  background: #4a4a4a;
  box-shadow: 0 3px 14px rgba(0, 0, 0, .45), 0 0 2px rgba(0, 0, 0, .5);
}
.restore-close { position: absolute; right: 12px; top: 12px; }
.restore-title { height: 24px; font-size: 16.500px; font-weight: 700; line-height: 24px; }
.restore-text { margin: 12px 0 0; font-size: 15px; line-height: 22px; }
.restore-button {
  display: block;
  width: 92px;
  height: 40px;
  margin: 19px 0 0 auto;
  padding: 0;
  border: 0;
  border-radius: 3px;
  background: #006cbe;
  color: #fff;
  font: 600 14px/40px "Noto Sans", "Open Sans", sans-serif;
}
</style>
